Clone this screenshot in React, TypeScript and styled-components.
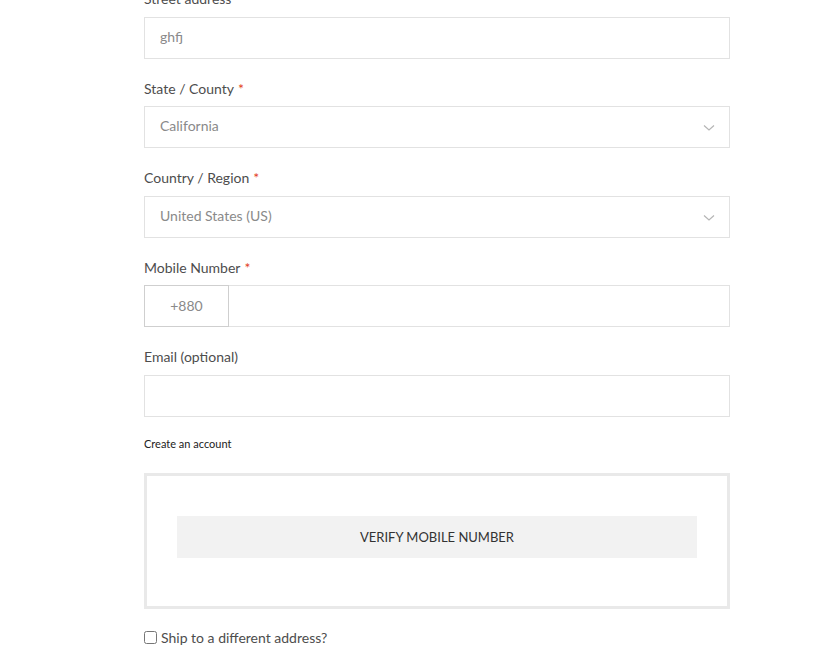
import styled, { createGlobalStyle } from 'styled-components';

const GlobalStyle = createGlobalStyle`
  body {
    margin: 0;
    background: #fff;
    font-family: Lato, "Noto Sans", sans-serif;
    overflow: hidden;
  }
`;

const Page = styled.div`
  width: 586px;
  margin: -11px 0 0 144px;
`;

const Field = styled.div`
  margin-bottom: 20px;
`;

const Label = styled.label`
  display: block;
  font-size: 14px;
  line-height: 20px;
  color: #4d4d4d;
  margin-bottom: 7.5px;
`;

const Required = styled.span`
  color: #e2401c;
  margin-left: 4px;
`;

const Input = styled.input`
  box-sizing: border-box;
  display: block;
  width: 100%;
  height: 42px;
  border: 1px solid #e2e2e2;
  padding: 0 15px 3px;
  font-family: inherit;
  font-size: 14px;
  color: #8a8a8a;
  outline: none;
  background: #fff;
`;

const SelectBox = styled.div`
  box-sizing: border-box;
  display: flex;
  align-items: center;
  justify-content: space-between;
  height: 42px;
  border: 1px solid #e2e2e2;
  padding: 0 14px 3px 15px;
  font-size: 14px;
  color: #8a8a8a;
`;

const Chevron = styled.svg`
  width: 12px;
  height: 8px;
  margin-top: 5px;
`;

const PhoneRow = styled.div`
  display: flex;
  height: 42px;
`;

const Prefix = styled.div`
  box-sizing: border-box;
  width: 85px;
  display: flex;
  align-items: center;
  justify-content: center;
  padding-bottom: 2px;
  border: 1px solid #cfcfcf;
  font-size: 14px;
  color: #8a8a8a;
`;

const PhoneInput = styled(Input)`
  flex: 1;
  height: 42px;
  border-left: none;
`;

const SmallText = styled.div`
  font-size: 11px;
  color: #222;
  line-height: 16px;
  margin-top: -1px;
`;

const VerifyBox = styled.div`
  margin-top: 21px;
  border: 3px solid #e9e9e9;
  padding: 40px 30px 48px;
`;

const VerifyButton = styled.button`
  display: block;
  width: 100%;
  height: 42px;
  border: none;
  background: #f2f2f2;
  font-family: inherit;
  font-size: 13px;
  color: #333;
`;

const CheckRow = styled.label`
  display: flex;
  align-items: center;
  margin-top: 19px;
  font-size: 14px;
  line-height: 20px;
  color: #4d4d4d;
`;

const Checkbox = styled.input`
  margin: 0 4px 0 0;
  width: 13px;
  height: 13px;
`;

function Select({ value }: { value: string }) {
  return (
    <SelectBox>
      <span>{value}</span>
      <Chevron viewBox="0 0 12 8">
        <path d="M1 1.5 L6 6 L11 1.5" fill="none" stroke="#b5b5b5" strokeWidth="1.2" />
      </Chevron>
    </SelectBox>
  );
}

export default function App() {
  return (
    <>
      <GlobalStyle />
      <Page>
        <Field>
          <Label>Street address</Label>
          <Input defaultValue="ghfj" />
        </Field>
        <Field>
          <Label>
            State / County<Required>*</Required>
          </Label>
          <Select value="California" />
        </Field>
        <Field>
          <Label>
            Country / Region<Required>*</Required>
          </Label>
          <Select value="United States (US)" />
        </Field>
        <Field>
          <Label>
            Mobile Number<Required>*</Required>
          </Label>
          <PhoneRow>
            <Prefix>+880</Prefix>
            <PhoneInput />
          </PhoneRow>
        </Field>
        <Field>
          <Label>Email (optional)</Label>
          <Input />
        </Field>
        <SmallText>Create an account</SmallText>
        <VerifyBox>
          <VerifyButton>VERIFY MOBILE NUMBER</VerifyButton>
        </VerifyBox>
        <CheckRow>
          <Checkbox type="checkbox" />
          Ship to a different address?
        </CheckRow>
      </Page>
    </>
  );
}
